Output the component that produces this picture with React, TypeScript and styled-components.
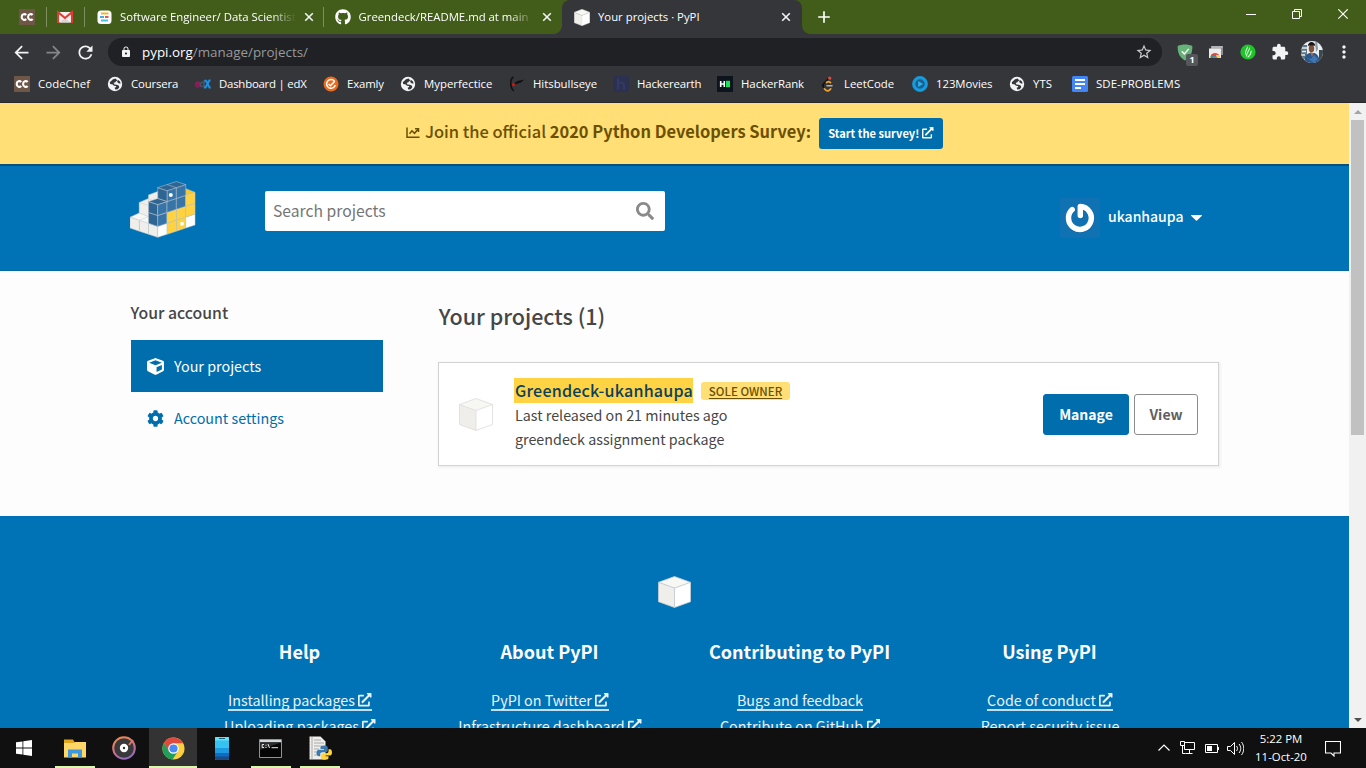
import React from "react";
import styled, { createGlobalStyle, css } from "styled-components";
import {
  MdArrowBack,
  MdArrowForward,
  MdRefresh,
  MdLock,
  MdStarBorder,
  MdExtension,
  MdMoreVert,
  MdAdd,
} from "react-icons/md";
import { FaGithub, FaSearch, FaCube, FaCog, FaExternalLinkAlt } from "react-icons/fa";

const PAGE_FONT = '"Noto Sans CJK SC", "Noto Sans", sans-serif';
const UI_FONT = '"Open Sans", "Noto Sans", sans-serif';

const GlobalStyle = createGlobalStyle`
  * { box-sizing: border-box; }
  html, body { margin: 0; height: 768px; overflow: hidden; background: #101010; }
  svg { display: block; flex: none; }
`;

const Screen = styled.div`
  display: flex;
  flex-direction: column;
  width: 1366px;
  height: 768px;
  overflow: hidden;
  font-family: ${UI_FONT};
`;

/* ---------- tab strip ---------- */

const TabStrip = styled.div`
  display: flex;
  height: 34px;
  padding-left: 8px;
  background: #425c1a;
  color: #fff;
`;

const PinnedTab = styled.div<{ $width: number; $inset: number }>`
  display: flex;
  align-items: center;
  width: ${(p) => p.$width}px;
  height: 20px;
  margin-top: 7px;
  padding-left: ${(p) => p.$inset}px;
  border-right: 1px solid #7d8e62;
`;

const Tab = styled.div<{ $active?: boolean; $line?: boolean }>`
  position: relative;
  display: flex;
  align-items: center;
  width: ${(p) => (p.$active ? 240 : 238.5)}px;
  height: ${(p) => (p.$active ? 34 : 20)}px;
  margin-top: ${(p) => (p.$active ? 0 : 7)}px;
  padding: 0 ${(p) => (p.$active ? 10 : 9)}px 0 ${(p) => (p.$active || p.$line ? 12 : 11)}px;
  border-right: ${(p) => (p.$line ? "1px solid #7d8e62" : "none")};
  ${(p) =>
    p.$active &&
    css`
      background: #35363a;
      border-radius: 8px 8px 0 0;
      &::before,
      &::after {
        content: "";
        position: absolute;
        bottom: 0;
        width: 8px;
        height: 8px;
      }
      &::before {
        left: -8px;
        background: radial-gradient(circle at 0 0, transparent 7.5px, #35363a 8px);
      }
      &::after {
        right: -8px;
        background: radial-gradient(circle at 100% 0, transparent 7.5px, #35363a 8px);
      }
    `}
`;

const TabTitle = styled.span<{ $fade?: boolean }>`
  flex: 1;
  margin-left: 8px;
  white-space: nowrap;
  font-size: 11.35px;
  line-height: 20px;
  ${(p) => p.$fade && "mask-image: linear-gradient(to right, #000 86%, transparent 100%);"}
`;

const CloseMark = styled.svg`
  width: 12px;
  height: 12px;
  margin-left: 7px;
`;

const NewTab = styled.div`
  display: flex;
  align-items: center;
  margin-left: 12px;
`;

const WindowControls = styled.div`
  display: flex;
  gap: 35px;
  margin: 9px 17px 0 auto;
`;

/* ---------- toolbar ---------- */

const Toolbar = styled.div`
  display: flex;
  align-items: center;
  height: 36px;
  background: #35363a;
  color: #f1f3f4;
`;

const NavButtons = styled.div`
  display: flex;
  gap: 11px;
  width: 108px;
  padding-left: 11px;
  .dim {
    color: #85868a;
  }
`;

const Omnibox = styled.div`
  display: flex;
  align-items: center;
  width: 1054px;
  height: 28px;
  padding: 0 9px 0 12px;
  border-radius: 14px;
  background: #202124;
`;

const Url = styled.span`
  flex: 1;
  margin-left: 10px;
  color: #969a9e;
  font-size: 13.4px;
  line-height: 28px;
  b {
    color: #fff;
    font-weight: 400;
  }
`;

const Extensions = styled.div`
  display: grid;
  grid-template-columns: 31px 32px 31px 30px 33px 32px;
  align-items: center;
  flex: 1;
  padding-left: 15px;
`;

const Shield = styled.div`
  position: relative;
  width: 16px;
  height: 16px;
`;

const ShieldCount = styled.span`
  position: absolute;
  left: 9px;
  top: 10px;
  width: 12px;
  height: 12px;
  border-radius: 2px;
  background: #56575a;
  color: #fff;
  font: 700 9px/12px "Open Sans", sans-serif;
  text-align: center;
`;

/* ---------- bookmarks ---------- */

const BookmarkBar = styled.div`
  display: grid;
  grid-template-columns: 93px 88px 128px 77px 109px 104px 104px 103px 92px 97px 63px 120px;
  height: 33px;
  padding: 0 0 4px 14px;
  border-bottom: 1px solid #29292c;
  background: #35363a;
`;

const Bookmark = styled.div<{ $track?: number }>`
  display: flex;
  align-items: center;
  gap: 8px;
  color: #fff;
  font-size: 11.4px;
  line-height: 28px;
  white-space: nowrap;
  span {
    letter-spacing: ${(p) => p.$track ?? 0}px;
  }
`;

/* ---------- page ---------- */

const Viewport = styled.div`
  display: flex;
  height: 625px;
`;

const Page = styled.div`
  width: 1349px;
  height: 625px;
  overflow: hidden;
  background: #fdfdfd;
  color: #464646;
  font-family: ${PAGE_FONT};
`;

const Banner = styled.div`
  display: flex;
  justify-content: center;
  align-items: center;
  height: 61px;
  padding: 0 0 1px;
  background: #ffdf76;
  color: #6b5000;
`;

const BannerText = styled.span`
  margin: -5px 8px 0 5px;
  font-size: 16.45px;
  font-weight: 500;
  line-height: 24px;
  white-space: pre;
  b {
    font-weight: 700;
  }
`;

const SurveyButton = styled.a`
  display: flex;
  align-items: center;
  justify-content: center;
  gap: 3px;
  width: 124px;
  height: 31px;
  border-radius: 3px;
  background: #006dad;
  color: #fff;
  font-size: 11.1px;
  font-weight: 700;
`;

const Header = styled.header`
  display: flex;
  height: 107px;
  padding: 15px 0 0 130px;
  border-top: 2px solid #04507f;
  border-bottom: 1px solid #006aa9;
  background: #0073b7;
`;

const SearchBox = styled.div`
  display: flex;
  align-items: center;
  justify-content: space-between;
  width: 400px;
  height: 40px;
  margin: 10px 395px 0 69px;
  padding: 0 11.5px 0 8px;
  border-radius: 2px;
  background: #fff;
  color: #757575;
  font-size: 15.7px;
  line-height: 40px;
  svg {
    color: #8a8a8a;
  }
`;

const UserMenu = styled.div`
  display: flex;
  align-items: center;
  height: 40px;
  margin-top: 17px;
  color: #fff;
  font-size: 14px;
  font-weight: 500;
  line-height: 38px;
  span {
    margin: -4px 4px 0 8px;
  }
`;

const Main = styled.main`
  display: grid;
  grid-template-columns: 252px 781px;
  column-gap: 55px;
  height: 245px;
  padding: 0 0 0 131px;
`;

const SideTitle = styled.h3`
  margin: 30px 0 15px -0.5px;
  font-size: 15.8px;
  font-weight: 500;
  line-height: 24px;
`;

const SideLink = styled.a<{ $active?: boolean }>`
  display: flex;
  align-items: center;
  gap: 10px;
  height: 52px;
  padding-left: 16px;
  background: ${(p) => (p.$active ? "#006dad" : "transparent")};
  color: ${(p) => (p.$active ? "#fff" : "#006dad")};
  font-size: 14.35px;
  line-height: 52px;
`;

const PageTitle = styled.h1`
  margin: 29px 0 30px 0.7px;
  font-size: 21.5px;
  font-weight: 500;
  line-height: 32px;
`;

const Card = styled.section`
  display: flex;
  align-items: center;
  height: 104px;
  padding: 0 20px;
  border: 1px solid #d3d3d3;
  background: #fff;
  box-shadow: 1px 1px 2px 1px rgba(0, 0, 0, 0.05);
`;

const CardBody = styled.div`
  flex: 1;
  margin-left: 21px;
  font-size: 14.3px;
  line-height: 24px;
`;

const CardHead = styled.div`
  display: flex;
  align-items: center;
  gap: 8px;
  height: 25px;
`;

const ProjectName = styled.span`
  height: 25px;
  padding-left: 1px;
  background: #ffd343;
  color: #0b3f5f;
  font-size: 16.1px;
  font-weight: 500;
  letter-spacing: 0.2px;
  line-height: 25px;
`;

const OwnerBadge = styled.span`
  width: 89px;
  height: 18px;
  margin-top: 1px;
  border-radius: 3px;
  background: #ffdf76;
  color: #6b5000;
  font-size: 11.5px;
  font-weight: 500;
  line-height: 18px;
  text-align: center;
  text-decoration: underline;
  text-underline-offset: 2px;
`;

const CardLine = styled.div`
  padding-left: 1px;
  line-height: 24px;
`;

const Button = styled.a<{ $primary?: boolean }>`
  width: ${(p) => (p.$primary ? 86 : 64)}px;
  height: 41px;
  margin-left: 5px;
  border: 1px solid ${(p) => (p.$primary ? "#006dad" : "#8c8c8c")};
  border-radius: 3px;
  background: ${(p) => (p.$primary ? "#006dad" : "#fff")};
  color: ${(p) => (p.$primary ? "#fff" : "#5f5f5f")};
  font-size: 14px;
  font-weight: 700;
  line-height: 39px;
  text-align: center;
`;

const Footer = styled.footer`
  display: flex;
  flex-direction: column;
  align-items: center;
  height: 212px;
  padding-top: 60px;
  overflow: hidden;
  background: #0073b7;
  color: #fff;
`;

const FooterColumns = styled.div`
  display: grid;
  grid-template-columns: repeat(4, 250px);
  margin-top: 31px;
  text-align: center;
`;

const FooterTitle = styled.h2`
  margin: 0 0 26px;
  font-size: 18.05px;
  font-weight: 700;
  line-height: 24px;
`;

const FooterLink = styled.div`
  display: flex;
  justify-content: center;
  height: 26px;
  padding-left: 1px;
  font-size: 14.32px;
  color: #e9f3f9;
`;

const FooterAnchor = styled.a`
  display: flex;
  gap: 3.5px;
  height: 22px;
  border-bottom: 2px solid #c3deee;
  line-height: 22px;
  svg {
    margin-top: 4px;
  }
`;

/* ---------- scrollbar ---------- */

const Scrollbar = styled.div`
  display: flex;
  flex-direction: column;
  align-items: center;
  justify-content: space-between;
  width: 17px;
  background: #f1f1f1;
`;

const Thumb = styled.div`
  width: 13px;
  height: 315px;
  margin-bottom: auto;
  background: #c1c1c1;
`;

const ArrowCell = styled.div`
  display: flex;
  align-items: center;
  height: 17px;
`;

/* ---------- taskbar ---------- */

const Taskbar = styled.div`
  display: flex;
  height: 40px;
  background: #101010;
  color: #fff;
`;

const TaskItem = styled.div<{ $state?: "open" | "focus"; $gap?: number }>`
  display: flex;
  align-items: center;
  justify-content: center;
  width: ${(p) => (p.$state === "focus" ? 48 : 40)}px;
  margin-right: ${(p) => p.$gap ?? 9}px;
  border-bottom: 2px solid ${(p) => (p.$state ? "#dcf7ad" : "transparent")};
  padding-top: 2px;
  background: ${(p) => (p.$state === "focus" ? "#333" : "transparent")};
  background-clip: padding-box;
`;

const StartButton = styled.div`
  display: flex;
  align-items: center;
  width: 55px;
  padding-left: 16px;
`;

const Tray = styled.div`
  display: flex;
  align-items: center;
  margin-left: auto;
`;

const Clock = styled.div`
  width: 60px;
  margin: 0 14px 0 7px;
  font-size: 11.4px;
  line-height: 18px;
  text-align: center;
  white-space: nowrap;
`;

const ActionCenter = styled.svg`
  width: 16px;
  height: 17px;
  margin-right: 25px;
`;

/* ---------- drawings ---------- */

const CodeChefIcon = () => (
  <svg width="16" height="16" viewBox="0 0 16 16">
    <rect width="16" height="16" fill="#6f5747" />
    <path d="M7.200 6C5.900 4.500 2.700 4.800 2.700 8s3.200 3.500 4.500 2M13.600 6C12.300 4.500 9.100 4.800 9.100 8s3.200 3.500 4.500 2" fill="none" stroke="#fff" strokeWidth="2.100" />
  </svg>
);

const GmailIcon = () => (
  <svg width="16" height="16" viewBox="0 0 16 16">
    <path d="M1 3h14v10.500H1z" fill="#f1efef" />
    <path d="M3 13.500 8 8.500l5 5z" fill="#d9d5d5" />
    <path d="M1 14V3.200L8 9l7-5.800V14" fill="none" stroke="#dc3d33" strokeWidth="2.100" />
  </svg>
);

const JobIcon = () => (
  <svg width="15" height="16" viewBox="0 0 15 16">
    <rect x=".5" y="1.500" width="14" height="13.500" rx="3.500" fill="#fff" />
    <path d="M4 4.500h7.500" stroke="#f2b52c" strokeWidth="2" />
    <path d="M3 8h4" stroke="#44aee8" strokeWidth="2" />
    <path d="M8 8h3.500" stroke="#e8525c" strokeWidth="2" />
    <path d="M4 11.500h7" stroke="#4cc0dc" strokeWidth="2" />
  </svg>
);

const CubeIcon = ({ width, height, line }: { width: number; height: number; line: string }) => (
  <svg width={width} height={height} viewBox="0 0 34 33" preserveAspectRatio="none">
    <path d="M.5 6.500 17 .5l16.500 6L17 12.500z" fill="#f7f7f4" />
    <path d="M.5 6.500 17 12.500v20L.5 26.500z" fill="#efeeea" />
    <path d="M33.500 6.500 17 12.500v20l16.500-6z" fill="#fff" />
    <path d="M.5 6.500 17 .5l16.500 6v20l-16.500 6-16.500-6zL17 12.500l16.500-6M17 12.500v20" fill="none" stroke={line} strokeWidth=".8" />
  </svg>
);

const GlobeIcon = () => (
  <svg width="16" height="16" viewBox="0 0 16 16">
    <circle cx="8" cy="8" r="7.200" fill="#f1f3f4" />
    <path d="M8.800 2.600 6 3.200 2.800 6.300l.4 1.700 2.600.5 1.100 1.300 2.100.3.200 1-1.500.6.500 1.900 2.600-.4 1.500-2-.6-1.600-2-.9-2.200-.2-.9-1.600 1.800-.6.700-1.300 1.600.4z" fill="#35363a" />
    <path d="M10.800 3.800 13 5.600l.6 2.200-2-.5-1.400-1.300z" fill="#35363a" />
  </svg>
);

const EdxIcon = () => (
  <svg width="16" height="16" viewBox="0 0 16 16" fill="none" strokeWidth="1.700">
    <path d="M.8 8.300h3.800c0-2.800-3.800-2.800-3.800.2s3 2.700 3.800 1.400" stroke="#8f1d5c" />
    <path d="M9.200 4v7.500M9 8.300c0-2.600-3.700-2.600-3.700.2S9 11 9 8.700" stroke="#45525f" />
    <path d="M9.500 4.800h1.500l3.500 6.700h1.200M15.500 4.500h-1.200l-3.800 7H9" stroke="#1f8fe0" strokeWidth="2" />
  </svg>
);

const ExamlyIcon = () => (
  <svg width="16" height="16" viewBox="0 0 16 16" fill="none">
    <circle cx="8" cy="8" r="7.500" fill="#ec6a1c" />
    <path d="M11.500 5.200A4.400 4.400 0 1 0 12.300 9" stroke="#fff" strokeWidth="1.500" />
    <path d="m5.600 8 1.800 1.700 4.400-4.500" stroke="#fff" strokeWidth="1.500" />
  </svg>
);

const BullseyeIcon = () => (
  <svg width="16" height="16" viewBox="0 0 16 16" fill="none">
    <path d="M4.500 1C1 3 .5 11 4.800 15" stroke="#111" strokeWidth="1.500" />
    <path d="m4.500 8 4-3 7-1.500-4 3.200-6 1.800z" fill="#111" />
    <circle cx="4.500" cy="8.500" r="1.500" fill="#e01212" />
  </svg>
);

const HackerearthIcon = () => (
  <svg width="16" height="16" viewBox="0 0 16 16" fill="none">
    <rect width="16" height="16" fill="#2c3150" />
    <path d="M5 2.500v11M5 8.500c0-2.500 6-2.800 6 .5v4.500" stroke="#323a68" strokeWidth="2" />
  </svg>
);

const HackerRankIcon = () => (
  <svg width="16" height="16" viewBox="0 0 16 16">
    <rect width="16" height="16" fill="#0e141e" />
    <path d="M3.700 5v6M7.300 5v6M3.700 8h3.600" stroke="#fff" strokeWidth="1.600" fill="none" />
    <rect x="9" y="4.800" width="4" height="6.400" fill="#15e35a" />
  </svg>
);

const LeetCodeIcon = () => (
  <svg width="16" height="16" viewBox="0 0 16 16" fill="none" strokeLinecap="round">
    <path d="M8.500 2.500 3.500 8c-1 1-1 2 0 3" stroke="#111" strokeWidth="1.700" />
    <path d="m4.500 12.800 1 1c1.500 1.300 3 1.300 4.200 0l1-1M6.500 6.500c1.300-1.100 2.700-1 4 .2" stroke="#f0a02c" strokeWidth="1.700" />
    <path d="M7 9.700h5" stroke="#b3b3b3" strokeWidth="1.500" />
    <circle cx="9.700" cy="2.200" r="1.600" fill="#e04a3c" />
  </svg>
);

const PlayIcon = () => (
  <svg width="16" height="16" viewBox="0 0 16 16">
    <circle cx="8" cy="8" r="6.300" fill="#1b5f8c" stroke="#169bdc" strokeWidth="3.200" />
    <path d="m6.200 5 4.800 3-4.800 3z" fill="#2db2ee" />
  </svg>
);

const DocsIcon = () => (
  <svg width="16" height="16" viewBox="0 0 16 16">
    <rect width="16" height="16" rx="1.500" fill="#4285f4" />
    <path d="M3 4h10M3 8h10M3 12h6" stroke="#fff" strokeWidth="1.900" />
  </svg>
);

const AvatarPhoto = () => (
  <svg width="22" height="22" viewBox="0 0 22 22">
    <defs>
      <clipPath id="photo">
        <circle cx="11" cy="11" r="11" />
      </clipPath>
    </defs>
    <g clipPath="url(#photo)">
      <rect width="22" height="22" fill="#e9eef0" />
      <path d="M0 4h6v14H0z" fill="#5f7686" />
      <path d="M1 7h5M1 10.500h4M0 14h4" stroke="#e6edf0" strokeWidth="1.500" />
      <path d="M14 0h2l1 8-2 3z" fill="#8b9aa3" />
      <path d="M18 9h4v10h-4z" fill="#3c474f" />
      <path d="M3.500 22c0-7 2-9 5-10l5 0c3 1 5 4 5 10z" fill="#2b568a" />
      <path d="M6 17l4 1 3-4 4 4-4 4z" fill="#3f77b5" />
      <ellipse cx="10.500" cy="7.500" rx="2.700" ry="4" fill="#80513c" />
      <path d="M6.800 5.500c0-6 7.500-6 7.500 0l-1-1h-5.500z" fill="#1b1717" />
      <path d="m9 11 3.500 1.500L11 16z" fill="#9f6e58" />
    </g>
  </svg>
);

const faceRight = (col: number, row: number) => {
  const x = 27.7 + 9.33 * col;
  const y = 56.3 - 3.08 * col - 10.9 * row;
  return `${x},${y} ${x + 9.33},${y - 3.08} ${x + 9.33},${y - 13.98} ${x},${y - 10.9}`;
};
const faceLeft = (col: number, row: number) => {
  const x = 27.7 - 9.23 * col;
  const y = 56.3 - 3.08 * col - 10.9 * row;
  return `${x},${y} ${x - 9.23},${y - 3.08} ${x - 9.23},${y - 13.98} ${x},${y - 10.9}`;
};
const RIGHT_FACES = [
  ["#fff", "#3775a9", "#3775a9"],
  ["#ffd242", "#ffd242", "#3775a9", "#3775a9"],
  ["#ffd242", "#ffd242", "#3775a9", "#3775a9"],
  ["#fff", "#ffd242", "#ffd242"],
];
const LEFT_FACES = [["#efeeea", "#2f6593", "#2f6593"], ["#efeeea"], ["#efeeea"]];

const PyPILogo = () => (
  <svg width="66" height="58" viewBox="0 0 66 58" stroke="#c3c8cf" strokeWidth=".5" strokeLinejoin="round">
    <path d="M18.500 14 27.700 10.500 37 14v20H18.500z" fill="#efeeea" />
    <path d="M9.200 21.500 18.500 17.500 27.700 22v17H9.200z" fill="#efeeea" />
    <path d="m9.200 21.500 9.300 3M18.500 17.500v22M9.200 32l9.300 4" fill="none" />
    <path d="M0 36.200 9.200 32l18.500 7-9.200 4z" fill="#f7f7f4" />
    <path d="m9.200 39.200 9.300-3.700" fill="none" />
    <path d="M55.900 7.800 65 11.300 55.900 14.400z" fill="#fbc81e" />
    {LEFT_FACES.map((rows, c) => rows.map((f, r) => <polygon key={`l${c}${r}`} points={faceLeft(c, r)} fill={f} />))}
    {RIGHT_FACES.map((rows, c) => rows.map((f, r) => <polygon key={`r${c}${r}`} points={faceRight(c, r)} fill={f} />))}
    <path d="m27.700 6.600 9.330 3.100v10.900l-9.330-3.100z" fill="#2f6593" />
    <path d="m27.700 23.600 9.330-3-9.330-3.100-9.200 3z" fill="#2f6593" />
    <path d="M27.700 6.600 46.500.5l9.300 3.100-18.770 6.100z" fill="#2f6593" />
    <path d="m37 3.600 9.400 3.100" />
    <circle cx="40.800" cy="14" r="2" fill="#fff" stroke="none" />
    <circle cx="52" cy="42.700" r="2" fill="#fff" stroke="none" />
  </svg>
);

const Gravatar = () => (
  <svg width="40" height="40" viewBox="0 0 40 40">
    <rect width="40" height="40" rx="3" fill="#1172b3" />
    <path d="M12.500 12A11.300 11.300 0 1 0 20.500 9v9" fill="none" stroke="#08548c" strokeOpacity=".35" strokeWidth="6.500" strokeLinecap="round" strokeLinejoin="round" />
    <path d="M12.200 11.600A11.400 11.400 0 1 0 20.300 8.600v8.900" fill="none" stroke="#fff" strokeWidth="5.500" strokeLinecap="round" strokeLinejoin="round" />
  </svg>
);

const ChromeLogo = ({ size }: { size: number }) => (
  <svg width={size} height={size} viewBox="0 0 24 24">
    <circle cx="12" cy="12" r="11.500" fill="#fdcf3d" />
    <path d="M2 6.200A11.500 11.500 0 0 1 22 6.500H12L7 15z" fill="#dd4b3e" />
    <path d="M2 6.200A11.500 11.500 0 0 0 11 23.500l5.500-8.500-9 0z" fill="#1f9f5c" />
    <circle cx="12" cy="12" r="5.500" fill="#fff" />
    <circle cx="12" cy="12" r="4.300" fill="#4a8af4" />
  </svg>
);

const Close = () => (
  <CloseMark viewBox="0 0 12 12">
    <path d="m2.200 2.200 7.600 7.600M9.800 2.200 2.200 9.800" stroke="#f1f3f4" strokeWidth="1.600" />
  </CloseMark>
);

const BOOKMARKS: { name: string; icon: React.ReactNode; track?: number }[] = [
  { name: "CodeChef", icon: <CodeChefIcon />, track: 0.05 },
  { name: "Coursera", icon: <GlobeIcon />, track: -0.15 },
  { name: "Dashboard | edX", icon: <EdxIcon />, track: -0.22 },
  { name: "Examly", icon: <ExamlyIcon />, track: -0.15 },
  { name: "Myperfectice", icon: <GlobeIcon />, track: 0 },
  { name: "Hitsbullseye", icon: <BullseyeIcon />, track: -0.03 },
  { name: "Hackerearth", icon: <HackerearthIcon />, track: -0.12 },
  { name: "HackerRank", icon: <HackerRankIcon />, track: -0.05 },
  { name: "LeetCode", icon: <LeetCodeIcon /> },
  { name: "123Movies", icon: <PlayIcon />, track: -0.06 },
  { name: "YTS", icon: <GlobeIcon />, track: 0.1 },
  { name: "SDE-PROBLEMS", icon: <DocsIcon />, track: 0.07 },
];

const FOOTER: { title: string; links: [string, boolean][] }[] = [
  { title: "Help", links: [["Installing packages", true], ["Uploading packages", true]] },
  { title: "About PyPI", links: [["PyPI on Twitter", true], ["Infrastructure dashboard", true]] },
  { title: "Contributing to PyPI", links: [["Bugs and feedback", false], ["Contribute on GitHub", true]] },
  { title: "Using PyPI", links: [["Code of conduct", true], ["Report security issue", false]] },
];

export default function App() {
  return (
    <Screen>
      <GlobalStyle />
      <TabStrip>
        <PinnedTab $width={39} $inset={11}><CodeChefIcon /></PinnedTab>
        <PinnedTab $width={38} $inset={10}><GmailIcon /></PinnedTab>
        <Tab $line>
          <JobIcon />
          <TabTitle $fade>Software Engineer/ Data Scientist</TabTitle>
          <Close />
        </Tab>
        <Tab>
          <FaGithub size={16} />
          <TabTitle $fade>Greendeck/README.md at main ·</TabTitle>
          <Close />
        </Tab>
        <Tab $active>
          <CubeIcon width={16} height={17} line="#dcdcd8" />
          <TabTitle>Your projects · PyPI</TabTitle>
          <Close />
        </Tab>
        <NewTab><MdAdd size={20} /></NewTab>
        <WindowControls>
          <svg width="11" height="11"><path d="M0 5.500h10" stroke="#fff" /></svg>
          <svg width="11" height="11"><path d="M.5 2.500h7v7h-7zM2.500 2.500v-2h7v7h-2" fill="none" stroke="#fff" /></svg>
          <svg width="11" height="11"><path d="m.3.300 9.400 9.400M9.700.3.300 9.700" stroke="#fff" strokeWidth="1.200" /></svg>
        </WindowControls>
      </TabStrip>

      <Toolbar>
        <NavButtons>
          <MdArrowBack size={21} />
          <MdArrowForward size={21} className="dim" />
          <MdRefresh size={21} />
        </NavButtons>
        <Omnibox>
          <MdLock size={12} />
          <Url><b>pypi.org</b>/manage/projects/</Url>
          <MdStarBorder size={18} color="#c9cbcd" />
        </Omnibox>
        <Extensions>
          <Shield>
            <svg width="16" height="17" viewBox="0 0 16 17">
              <path d="M8 .5c2.500 0 5 .5 7.300 1.500.3 6-1.600 11.500-7.300 14.500C2.300 13.500.4 8 .7 2 3 1 5.500.5 8 .5z" fill="#67b279" />
              <path d="m4.800 7.200 2.500 2.700 4.500-5" fill="none" stroke="#fff" strokeWidth="1.400" />
            </svg>
            <ShieldCount>1</ShieldCount>
          </Shield>
          <svg width="16" height="16" viewBox="0 0 16 16">
            <path d="M3 2h12v9H3z" fill="#8d8f92" />
            <path d="M3.500 2.500h11v1h-11z" fill="#d5d6d8" />
            <path d="M1 4.500h12v9.500H1z" fill="#ececec" />
            <path d="M2.500 13.500a4.500 4.500 0 0 1 9 0z" fill="#dd4b3e" />
            <path d="M2.500 14c0-2 .5-2.500 1.500-3.500L6 14z" fill="#2aa15c" />
            <path d="M11.500 14c0-1.500-.3-2.300-1-3H8l.5 3z" fill="#fdcf3d" />
            <path d="M5 14a2 2 0 0 1 4 0z" fill="#4a8af4" />
          </svg>
          <svg width="16" height="16" viewBox="0 0 16 16" fill="none">
            <circle cx="8" cy="8" r="7.600" fill="#1fc32a" />
            <path d="M5.500 10C4.500 8 7 6 7.500 3M6.500 12C6.500 9 9 7 9.700 4M8 13c2.500-1.500 3-4 3.200-6" stroke="#d9f8da" strokeWidth="1.100" strokeLinecap="round" />
          </svg>
          <MdExtension size={18} />
          <AvatarPhoto />
          <MdMoreVert size={20} />
        </Extensions>
      </Toolbar>

      <BookmarkBar>
        {BOOKMARKS.map((b) => (
          <Bookmark key={b.name} $track={b.track}>
            {b.icon}
            <span>{b.name}</span>
          </Bookmark>
        ))}
      </BookmarkBar>

      <Viewport>
        <Page>
          <Banner>
            <svg width="14" height="14" viewBox="0 0 14 14" fill="none" stroke="#6b5000" strokeWidth="1.500">
              <path d="M1 1.500v9.700h12.500M3.500 7.800l2.500-3 2.500 2.500L12.300 3M9 2.700h3.500v3.300" />
            </svg>
            <BannerText>Join the official <b>2020 Python Developers Survey:</b></BannerText>
            <SurveyButton>
              Start the survey!
              <FaExternalLinkAlt size={11.5} />
            </SurveyButton>
          </Banner>
          <Header>
            <PyPILogo />
            <SearchBox>
              Search projects
              <FaSearch size={18} />
            </SearchBox>
            <UserMenu>
              <Gravatar />
              <span>ukanhaupa</span>
              <svg width="18" height="18" viewBox="0 0 18 18" fill="#fff">
                <path d="M4.700 6h9.600c.6 0 .8.500.4.900L10 11.500c-.3.300-.7.300-1 0L4.300 6.900c-.4-.4-.2-.9.4-.9z" />
              </svg>
            </UserMenu>
          </Header>
          <Main>
            <nav>
              <SideTitle>Your account</SideTitle>
              <SideLink $active><FaCube size={17} />Your projects</SideLink>
              <SideLink><FaCog size={17} />Account settings</SideLink>
            </nav>
            <div>
              <PageTitle>Your projects (1)</PageTitle>
              <Card>
                <CubeIcon width={34} height={33} line="#dcdcda" />
                <CardBody>
                  <CardHead>
                    <ProjectName>Greendeck-ukanhaupa</ProjectName>
                    <OwnerBadge>SOLE OWNER</OwnerBadge>
                  </CardHead>
                  <CardLine>Last released on 21 minutes ago</CardLine>
                  <CardLine>greendeck assignment package</CardLine>
                </CardBody>
                <Button $primary>Manage</Button>
                <Button>View</Button>
              </Card>
            </div>
          </Main>
          <Footer>
            <CubeIcon width={33} height={32} line="#c9ced3" />
            <FooterColumns>
              {FOOTER.map((col) => (
                <div key={col.title}>
                  <FooterTitle>{col.title}</FooterTitle>
                  {col.links.map(([label, external]) => (
                    <FooterLink key={label}>
                      <FooterAnchor>
                        {label}
                        {external && <FaExternalLinkAlt size={13.5} />}
                      </FooterAnchor>
                    </FooterLink>
                  ))}
                </div>
              ))}
            </FooterColumns>
          </Footer>
        </Page>
        <Scrollbar>
          <ArrowCell><svg width="8" height="4"><path d="M0 4 4 0l4 4z" fill="#a3a3a3" /></svg></ArrowCell>
          <Thumb />
          <ArrowCell><svg width="8" height="4"><path d="M0 0l4 4 4-4z" fill="#505050" /></svg></ArrowCell>
        </Scrollbar>
      </Viewport>

      <Taskbar>
        <StartButton>
          <svg width="16" height="16" viewBox="0 0 16 16" fill="#fff">
            <path d="M0 2.300 6.500 1.400v6.200H0zM7.300 1.300 16 0v7.600H7.300zM0 8.400h6.500v6.200L0 13.700zM7.300 8.400H16V16l-8.700-1.300z" />
          </svg>
        </StartButton>
        <TaskItem $state="open">
          <svg width="22" height="19" viewBox="0 0 22 19">
            <path d="M0 .5h9l1.500 2.500H22V18H0z" fill="#e3a51c" />
            <path d="M0 4h10l1.500-1H22v15.500H0z" fill="#ffd768" />
            <path d="M4 10.500h14v8h-4v-4H8v4H4z" fill="#3f97dc" />
          </svg>
        </TaskItem>
        <TaskItem $gap={5}>
          <svg width="24" height="24" viewBox="0 0 24 24">
            <defs>
              <linearGradient id="ring" x1=".2" y1="0" x2=".6" y2="1">
                <stop offset="0" stopColor="#f0884a" />
                <stop offset=".5" stopColor="#cf7480" />
                <stop offset="1" stopColor="#9668c6" />
              </linearGradient>
            </defs>
            <circle cx="12" cy="12" r="10.800" fill="#39393b" stroke="url(#ring)" strokeWidth="2" />
            <path d="m17 9 4-5" stroke="#d77b70" strokeWidth="2" />
            <circle cx="12" cy="12" r="4.200" fill="#fff" />
            <circle cx="12" cy="12" r="1.200" fill="#333" />
          </svg>
        </TaskItem>
        <TaskItem $state="focus" $gap={5}><ChromeLogo size={23} /></TaskItem>
        <TaskItem>
          <svg width="14" height="23" viewBox="0 0 14 23">
            <rect width="14" height="23" rx="1" fill="#36c3f2" />
            <path d="M0 1a1 1 0 0 1 1-1h12a1 1 0 0 1 1 1v2.500H0z" fill="#5fe3f5" />
            <path d="M4 1.500h6" stroke="#14607e" />
            <path d="M0 11h14v6H0z" fill="#1c9be0" />
            <path d="M0 16h14v4H0z" fill="#0f6cc4" />
            <path d="M0 19.500h14V22a1 1 0 0 1-1 1H1a1 1 0 0 1-1-1z" fill="#1b4b86" />
          </svg>
        </TaskItem>
        <TaskItem $state="open">
          <svg width="24" height="19" viewBox="0 0 24 19">
            <rect width="23" height="19" rx="1" fill="#8f9296" />
            <path d="M1 1h21v2H1z" fill="#d5d8dc" />
            <path d="M1 3.500h21V18H1z" fill="#050505" />
            <path d="M1 3.500h21L1 11z" fill="#2b2b2b" />
            <path d="M5 5.500H3.200v3H5M7 5.700v1M7 8v1M9 5l1.500 4M12.500 8.700H19" stroke="#e8e8e8" fill="none" />
          </svg>
        </TaskItem>
        <TaskItem $state="open">
          <svg width="24" height="24" viewBox="0 0 24 24">
            <path d="M1.500.5h11l5 5v18h-16z" fill="#eeeeec" />
            <path d="M4 1v22M6 4h7M6 7h10M6 10h8M6 13h5M6 16h5M6 19h5" stroke="#a7a8a8" />
            <path d="M1.500 2v21" stroke="#6a6a6a" strokeDasharray="1.500 1.500" />
            <path d="M16 9.500c-3 0-3.500 1-3.500 2V13H16v.8h-5c-2 0-2.500 2-2.500 3.200s.5 3.200 2.200 3.200h1.500v-2c0-1.200 1-2 2.300-2h3.300c1.200 0 2-1 2-2v-2.500c0-1.600-1.500-2.200-3.800-2.200z" fill="#3b78ab" />
            <path d="M17 23.700c3 0 3.500-1 3.500-2v-1.500H17v-.8h5c1.500 0 2-1.700 2-3s-.5-3.200-2-3.200h-1.500v2c0 1.200-1 2-2.300 2h-3.300c-1.200 0-2 1-2 2v2.300c0 1.600 1.500 2.200 4.100 2.200z" fill="#ffd43f" />
          </svg>
        </TaskItem>
        <Tray>
          <svg width="86" height="20" viewBox="0 0 86 20" fill="none" stroke="#fff">
            <path d="m.5 12.500 5.500-5.500 5.500 5.500" strokeWidth="1.200" />
            <path d="M26.500 4.500h10v7h-10zM31.500 11.500v4M27.500 15.500h7M22.500 3.500h4v4h-4zM24.500 7.500v8h3" />
            <path d="M47.500 6.500h12v8h-12zM60.500 9v3" />
            <path d="M49 8h5v5h-5z" fill="#fff" stroke="none" />
            <path d="M69.500 8.500h3l4-4v12l-4-4h-3zM78.500 8c1.300 1.500 1.300 3.500 0 5M81 6c2.300 2.700 2.300 6.300 0 9M83.500 4c3 4 3 9 0 13" />
          </svg>
          <Clock>
            <div>5:22 PM</div>
            <div>11-Oct-20</div>
          </Clock>
          <ActionCenter viewBox="0 0 16 17" fill="none" stroke="#fff">
            <path d="M.5 1.500h15v11.500H9v3l-3-3H.5z" strokeWidth="1.100" />
          </ActionCenter>
        </Tray>
      </Taskbar>
    </Screen>
  );
}
